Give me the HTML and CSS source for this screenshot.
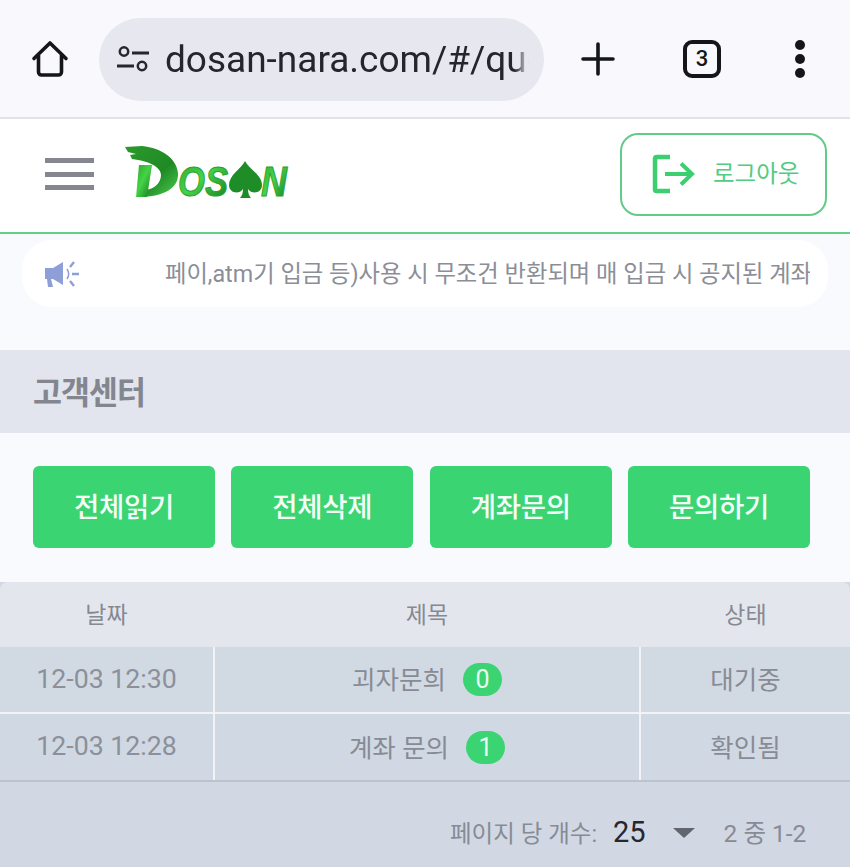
FILE: index.html
```html
<!DOCTYPE html>
<html lang="ko">
<head>
<meta charset="utf-8">
<title>DOSAN 고객센터</title>
<link rel="stylesheet" href="styles.css">
</head>
<body>
<div class="chrome">
  <svg class="home" viewBox="0 0 40 38" width="40" height="38"><path d="M4 18.500 20 3l16 15.500M8.500 15v17a3 3 0 0 0 3 3h17a3 3 0 0 0 3-3V15" fill="none" stroke="#15161a" stroke-width="3.600" stroke-linecap="round" stroke-linejoin="round"/></svg>
  <div class="omnibox">
    <svg class="tune" viewBox="0 0 34 26" width="34" height="26"><circle cx="8" cy="5.500" r="4.200" fill="none" stroke="#26272c" stroke-width="2.500"/><path d="M16 7h17M1 20h17" stroke="#26272c" stroke-width="2.800"/><circle cx="26" cy="20" r="4.200" fill="none" stroke="#26272c" stroke-width="2.500"/></svg>
    <div class="url"><span>dosan-nara.com/#/question</span></div>
  </div>
  <svg class="plus" viewBox="0 0 34 34" width="34" height="34"><path d="M17 2v30M2 17h30" stroke="#15161a" stroke-width="3.600" stroke-linecap="round"/></svg>
  <div class="tabs">3</div>
  <div class="dots"><i></i><i></i><i></i></div>
</div>

<header class="site">
  <div class="burger"><i></i><i></i><i></i></div>
  <svg class="logo" viewBox="0 0 170 56" width="170" height="56">
    <defs>
      <linearGradient id="lg" x1="0" y1="0" x2="1" y2="1"><stop offset="0" stop-color="#2fa52c"/><stop offset=".45" stop-color="#45d348"/><stop offset="1" stop-color="#12761c"/></linearGradient>
      <linearGradient id="lb" x1="0" y1="0" x2="1" y2="1"><stop offset="0" stop-color="#2c9a2e"/><stop offset=".6" stop-color="#1f8a25"/><stop offset="1" stop-color="#4ccf50"/></linearGradient>
    </defs>
    <path d="M1 2 18 1C38 3 53 14 54 28 55 42 42 52 14 52l3-7C30 46 37 38 37 30 37 22 25 16 8 14l-2-4 6-1-8-2z" fill="url(#lb)"/>
    <path d="M15 20h13L23 52H12z" fill="url(#lg)"/>
    <text class="logo-text" x="54" y="51" textLength="50" lengthAdjust="spacingAndGlyphs" fill="url(#lg)" stroke="#2a9f30">OS</text>
    <path d="M121 16c4 8 17 14 17 24 0 8-10 10-14 4 0 4 1 7 3 9h-11c2-2 3-5 3-9-4 6-14 4-14-4 0-10 12-16 16-24z" fill="#1f8d27"/>
    <text class="logo-text" x="137" y="51" textLength="26" lengthAdjust="spacingAndGlyphs" fill="url(#lg)" stroke="#2a9f30">N</text>
  </svg>
  <button class="logout" type="button">
    <svg viewBox="0 0 44 40" width="44" height="40"><path d="M19 3H5.500A1.500 1.500 0 0 0 4 4.500v31A1.500 1.500 0 0 0 5.500 37H19" fill="none" stroke="#3bcf70" stroke-width="4.500"/><path d="M14 20h26M30 9.500 41 20 30 30.500" fill="none" stroke="#3bcf70" stroke-width="4"/></svg>
    <span>로그아웃</span>
  </button>
</header>

<section class="notice-wrap">
  <div class="notice">
    <svg class="horn" viewBox="0 0 36 28" width="36" height="28"><path d="M1 8h8l10-6v23L9 19H7l2 8H4l-1-8H1z" fill="#8d9fd6"/><path d="M23 9c2 3 2 7 0 10" fill="none" stroke="#8d9fd6" stroke-width="1.500"/><path d="M26 7l4-5M28 14h7M26 21l4 5" stroke="#8d9fd6" stroke-width="2.400"/></svg>
    <div class="ticker"><span>페이,atm기 입금 등)사용 시 무조건 반환되며 매 입금 시 공지된 계좌</span></div>
  </div>
</section>

<h1 class="title">고객센터</h1>

<div class="actions">
  <button type="button">전체읽기</button>
  <button type="button">전체삭제</button>
  <button type="button">계좌문의</button>
  <button type="button">문의하기</button>
</div>

<div class="table">
  <div class="row head"><div>날짜</div><div>제목</div><div>상태</div></div>
  <div class="row body first">
    <div class="date">12-03 12:30</div>
    <div><span class="ko">괴자문희</span><b class="badge">0</b></div>
    <div><span class="ko">대기중</span></div>
  </div>
  <div class="row body">
    <div class="date">12-03 12:28</div>
    <div><span class="ko">계좌 문의</span><b class="badge">1</b></div>
    <div><span class="ko">확인됨</span></div>
  </div>
  <div class="pager">
    <span class="per">페이지 당 개수:</span>
    <span class="size">25</span>
    <i class="caret"></i>
    <span class="range">2 중 1-2</span>
  </div>
</div>
</body>
</html>
```
FILE: styles.css
```css
* { box-sizing: border-box; }
html, body { margin: 0; padding: 0; }
body {
  width: 850px;
  height: 867px;
  overflow: hidden;
  background: #f8fafe;
  font-family: "Roboto", "Noto Sans CJK KR", sans-serif;
  color: #878b95;
}
.chrome {
  height: 119px;
  background: #f9f9fd;
  border-bottom: 2px solid #e2e3ea;
  display: flex;
  align-items: center;
  padding: 0 0 0 30px;
}
.home { margin-right: 29px; flex: none; }
.omnibox {
  width: 445px;
  height: 83px;
  margin-top: 1px;
  border-radius: 42px;
  background: #e6e7ef;
  display: flex;
  align-items: center;
  padding-left: 17px;
  flex: none;
}
.tune { flex: none; margin-right: 15px; }
.url {
  width: 364px;
  overflow: hidden;
  white-space: nowrap;
  font-size: 37px;
  color: #25262b;
  -webkit-mask-image: linear-gradient(90deg, #000 96%, transparent);
  mask-image: linear-gradient(90deg, #000 96%, transparent);
}
.plus { margin-left: 37px; flex: none; }
.tabs {
  width: 38px;
  height: 38px;
  margin-left: 68px;
  flex: none;
  border: 4px solid #15161a;
  border-radius: 9px;
  color: #15161a;
  font-size: 22px;
  font-weight: 500;
  display: flex;
  align-items: center;
  justify-content: center;
}
.dots {
  margin-left: 74px;
  display: flex;
  flex-direction: column;
  gap: 4px;
}
.dots i { width: 10px; height: 10px; border-radius: 50%; background: #15161a; display: block; }

.site {
  height: 115px;
  background: #fff;
  border-bottom: 2px solid #62d08c;
  display: flex;
  align-items: center;
  padding: 0 23px 0 45px;
}
.burger { width: 49px; margin-top: -3px; display: flex; flex-direction: column; gap: 8.500px; }
.burger i { display: block; height: 5px; background: #85868f; }
.logo { margin-left: 30px; margin-top: -6px; }
.logo-text {
  font-family: "Liberation Sans", sans-serif;
  font-weight: 700;
  font-style: italic;
  font-size: 42px;
}
.logout {
  margin-left: auto;
  margin-top: -3px;
  width: 207px;
  height: 83px;
  background: #fff;
  border: 2px solid #62cb89;
  border-radius: 18px;
  display: flex;
  align-items: center;
  padding: 0 0 0 29px;
  font-family: inherit;
  color: #52cb82;
}
.logout span { margin-left: 18px; padding-bottom: 5px; font-size: 23.500px; white-space: nowrap; }

.notice-wrap { height: 116px; padding: 6px 22px 0; }
.notice {
  height: 67px;
  border-radius: 30px;
  background: #fff;
  display: flex;
  align-items: center;
  padding: 0 18px 0 22px;
}
.horn { flex: none; margin-right: 85px; }
.ticker {
  flex: 1;
  overflow: hidden;
  white-space: nowrap;
  padding-bottom: 3px;
  font-size: 23.300px;
  color: #8b8e97;
}

.title {
  margin: 0;
  height: 83px;
  padding: 0 0 4px 33px;
  background: #e2e5ed;
  display: flex;
  align-items: center;
  font-size: 31.500px;
  font-weight: 700;
  letter-spacing: -1px;
  color: #83868f;
}

.actions {
  height: 149px;
  padding: 33px 40px 34px 33px;
  display: flex;
  gap: 16.500px;
}
.actions button {
  flex: 1;
  border: 0;
  border-radius: 6px;
  background: #3bd472;
  color: #f4fff8;
  font-family: inherit;
  font-size: 27.500px;
  font-weight: 500;
  letter-spacing: -.3px;
  padding: 0 0 4px;
}

.table { background: #d1d8e4; height: 285px; }
.row {
  display: grid;
  grid-template-columns: 213px 1fr 209px;
  text-align: center;
  font-size: 25.500px;
}
.row > div { display: flex; align-items: center; justify-content: center; }
.head {
  height: 65px;
  background: #e4e6ed;
  border-radius: 8px 8px 0 0;
  font-size: 23px;
  color: #868992;
}
.head > div { padding-bottom: 4px; }
.body { border-bottom: 2px solid #f1f3f7; background: #d1d9e2; }
.body > div:nth-child(2) {
  border-left: 2px solid #f1f3f7;
  border-right: 2px solid #f1f3f7;
}
.body:not(.first) { height: 68px; border-bottom-color: #bcc3ce; background: #d0d8e3; }
.first { height: 67px; }
.row > .date { font-size: 26.700px; color: #8b909a; padding-bottom: 2px; }
.ko { padding-bottom: 4px; }
.badge {
  margin-left: 17px;
  width: 39px;
  height: 33px;
  border-radius: 17px;
  background: #3bd472;
  color: #eafff2;
  font-size: 25px;
  font-weight: 400;
  display: flex;
  align-items: center;
  justify-content: center;
}
.pager {
  height: 85px;
  display: flex;
  align-items: center;
  padding: 14px 0 0 450px;
  font-size: 23.500px;
  white-space: nowrap;
}
.per { width: 163px; }
.size { color: #25272d; font-size: 29px; }
.caret {
  margin-left: 27px;
  border-left: 11px solid transparent;
  border-right: 11px solid transparent;
  border-top: 10px solid #62656e;
  margin-top: 3px;
}
.range { margin-left: 29px; font-size: 24.500px; }
```
